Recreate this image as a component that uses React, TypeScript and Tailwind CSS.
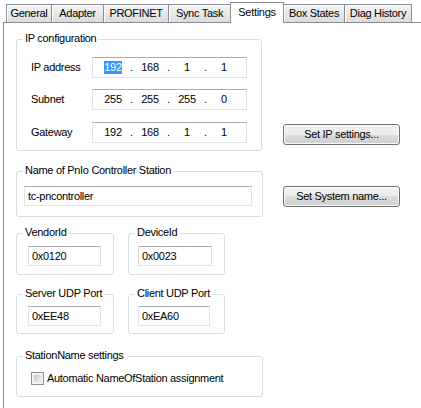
import React from "react";

const font = { fontFamily: '"Liberation Sans", Arial, sans-serif' };

function Tab({ label, w, active, noLeft, right }: { label: string; w: number; active?: boolean; noLeft?: boolean; right?: boolean }) {
  if (active) {
    return (
      <div
        className="relative z-10 -mb-px flex h-[21px] items-start justify-center border-x border-t border-[#898c95] bg-white pt-[3px] text-[11px] leading-[13px] text-black"
        style={{ width: w }}
      >
        {label}
      </div>
    );
  }
  return (
    <div
      className={
        "flex h-[18px] items-center justify-center border-t border-[#898c95] bg-linear-to-b from-[#f4f4f4] to-[#dcdcdc] text-[11px] leading-[13px] text-black shadow-[inset_1px_1px_0_#ffffff] " +
        (noLeft ? "" : "border-l ") +
        (right ? "border-r " : "")
      }
      style={{ width: w }}
    >
      {label}
    </div>
  );
}

function Group({ title, className, children }: { title: string; className: string; children?: React.ReactNode }) {
  return (
    <div className={"relative rounded-[3px] border border-[#d5dfe5] " + className}>
      <span className="absolute -top-[8px] left-[6px] bg-white px-[2px] text-[11px] leading-[13px] text-black whitespace-nowrap">
        {title}
      </span>
      {children}
    </div>
  );
}

function TextBox({ value, className }: { value: string; className: string }) {
  return (
    <div
      className={
        "flex h-[20px] items-center border border-[#e2e3ea] border-t-[#abadb3] bg-white pl-[3px] text-[11px] leading-[13px] text-black " +
        className
      }
    >
      {value}
    </div>
  );
}

function IpBox({ octets, selected }: { octets: string[]; selected?: boolean }) {
  return (
    <div className="flex h-[21px] w-[155px] items-center border border-[#e2e3ea] border-t-[#abadb3] bg-white pl-[5px] text-[11px] leading-[13px] text-black">
      {octets.map((o, i) => (
        <React.Fragment key={i}>
          <div className="flex w-[30px] justify-center">
            {selected && i === 0 ? <span className="bg-[#3399ff] text-white">{o}</span> : <span>{o}</span>}
          </div>
          {i < 3 && <div className="flex w-[7px] justify-center">.</div>}
        </React.Fragment>
      ))}
    </div>
  );
}

function Button({ label, className }: { label: string; className?: string }) {
  return (
    <div
      className={
        "flex h-[21px] w-[117px] items-center justify-center rounded-[3px] border border-[#707070] bg-[linear-gradient(to_bottom,#f2f2f2_0%,#ebebeb_50%,#dddddd_50%,#cfcfcf_100%)] text-[11px] leading-[13px] text-black shadow-[inset_0_0_0_1px_#fcfcfc] " +
        (className ?? "")
      }
    >
      {label}
    </div>
  );
}

export default function App() {
  return (
    <div className="h-[408px] w-[421px] overflow-hidden bg-white tracking-[-0.3px]" style={font}>
      <div className="flex h-[22px] items-end pl-[6px]">
        <Tab label="General" w={45} />
        <Tab label="Adapter" w={52} />
        <Tab label="PROFINET" w={65} />
        <Tab label="Sync Task" w={62} />
        <Tab label="Settings" w={54} active />
        <Tab label="Box States" w={60} noLeft />
        <Tab label="Diag History" w={68} right />
      </div>
      <div className="ml-[3px] h-[386px] border-l border-t border-[#898c95] bg-white pl-[12px] pt-[16px]">
        <div className="flex items-start">
          <Group title="IP configuration" className="h-[112px] w-[246px] pl-[14px] pt-[17px]">
            <div className="flex items-center">
              <div className="w-[61px] text-[11px] leading-[13px]">IP address</div>
              <IpBox octets={["192", "168", "1", "1"]} selected />
            </div>
            <div className="mt-[11px] flex items-center">
              <div className="w-[61px] text-[11px] leading-[13px]">Subnet</div>
              <IpBox octets={["255", "255", "255", "0"]} />
            </div>
            <div className="mt-[12px] flex items-center">
              <div className="w-[61px] text-[11px] leading-[13px]">Gateway</div>
              <IpBox octets={["192", "168", "1", "1"]} />
            </div>
          </Group>
          <Button label="Set IP settings..." className="ml-[21px] mt-[85px]" />
        </div>
        <div className="mt-[20px] flex items-start">
          <Group title="Name of PnIo Controller Station" className="h-[46px] w-[247px] pl-[7px] pt-[14px]">
            <TextBox value="tc-pncontroller" className="w-[228px]" />
          </Group>
          <Button label="Set System name..." className="ml-[20px] mt-[15px]" />
        </div>
        <div className="mt-[16px] flex items-start">
          <Group title="VendorId" className="h-[42px] w-[98px] pl-[11px] pt-[12px]">
            <TextBox value="0x0120" className="w-[73px]" />
          </Group>
          <Group title="DeviceId" className="ml-[14px] h-[42px] w-[97px] pl-[9px] pt-[12px]">
            <TextBox value="0x0023" className="w-[74px]" />
          </Group>
        </div>
        <div className="mt-[19px] flex items-start">
          <Group title="Server UDP Port" className="h-[40px] w-[98px] pl-[11px] pt-[11px]">
            <TextBox value="0xEE48" className="w-[73px]" />
          </Group>
          <Group title="Client UDP Port" className="ml-[14px] h-[40px] w-[97px] pl-[9px] pt-[11px]">
            <TextBox value="0xEA60" className="w-[72px]" />
          </Group>
        </div>
        <Group title="StationName settings" className="mt-[22px] h-[41px] w-[247px] pl-[14px] pt-[15px]">
          <div className="flex items-center">
            <div className="h-[13px] w-[13px] border border-[#8e8f8f] bg-[#f4f4f4] p-[1px]">
              <div className="h-full w-full border border-[#f0f0f0] bg-linear-to-br from-[#c4c8cc] to-[#eeeeee]" />
            </div>
            <span className="ml-[3px] text-[11px] leading-[13px] text-black">Automatic NameOfStation assignment</span>
          </div>
        </Group>
      </div>
    </div>
  );
}
